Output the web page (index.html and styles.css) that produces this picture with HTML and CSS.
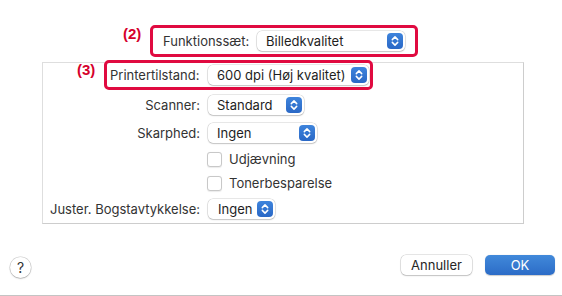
FILE: index.html
```html
<!DOCTYPE html>
<html lang="da">
<head>
<meta charset="utf-8">
<title>Billedkvalitet</title>
<link rel="stylesheet" href="styles.css">
</head>
<body>
  <div class="top">
    <span class="callout callout-2">(2)</span>
    <div class="mark mark-set">
      <span class="set-label">Funktionssæt:</span>
      <div class="popup w-set"><span>Billedkvalitet</span><span class="stepper"><svg viewBox="0 0 16 16" width="16" height="16"><path d="M5.3 6.6 L8 3.9 L10.7 6.6 M5.3 9.4 L8 12.1 L10.7 9.4" fill="none" stroke="#fff" stroke-width="1.5" stroke-linecap="round" stroke-linejoin="round"/></svg></span></div>
    </div>
  </div>

  <div class="panel">
    <div class="lead">
      <span class="callout callout-3">(3)</span>
      <div class="mark mark-print">
        <span class="print-label">Printertilstand:</span>
        <div class="popup w-print"><span>600 dpi (Høj kvalitet)</span><span class="stepper"><svg viewBox="0 0 16 16" width="16" height="16"><path d="M5.3 6.6 L8 3.9 L10.7 6.6 M5.3 9.4 L8 12.1 L10.7 9.4" fill="none" stroke="#fff" stroke-width="1.5" stroke-linecap="round" stroke-linejoin="round"/></svg></span></div>
      </div>
    </div>

    <div class="row">
      <span class="label">Scanner:</span>
      <div class="popup w-scan"><span>Standard</span><span class="stepper"><svg viewBox="0 0 16 16" width="16" height="16"><path d="M5.3 6.6 L8 3.9 L10.7 6.6 M5.3 9.4 L8 12.1 L10.7 9.4" fill="none" stroke="#fff" stroke-width="1.5" stroke-linecap="round" stroke-linejoin="round"/></svg></span></div>
    </div>

    <div class="row">
      <span class="label">Skarphed:</span>
      <div class="popup w-sharp"><span>Ingen</span><span class="stepper"><svg viewBox="0 0 16 16" width="16" height="16"><path d="M5.3 6.6 L8 3.9 L10.7 6.6 M5.3 9.4 L8 12.1 L10.7 9.4" fill="none" stroke="#fff" stroke-width="1.5" stroke-linecap="round" stroke-linejoin="round"/></svg></span></div>
    </div>

    <div class="check-row">
      <span class="checkbox"></span>
      <span>Udjævning</span>
    </div>

    <div class="check-row">
      <span class="checkbox"></span>
      <span>Tonerbesparelse</span>
    </div>

    <div class="row">
      <span class="label">Juster. Bogstavtykkelse:</span>
      <div class="popup w-font"><span>Ingen</span><span class="stepper"><svg viewBox="0 0 16 16" width="16" height="16"><path d="M5.3 6.6 L8 3.9 L10.7 6.6 M5.3 9.4 L8 12.1 L10.7 9.4" fill="none" stroke="#fff" stroke-width="1.5" stroke-linecap="round" stroke-linejoin="round"/></svg></span></div>
    </div>
  </div>

  <div class="footer">
    <span class="help">?</span>
    <span class="spacer"></span>
    <span class="btn btn-cancel">Annuller</span>
    <span class="btn btn-ok">OK</span>
  </div>
</body>
</html>
```
FILE: styles.css
```css
html, body {
  margin: 0;
  padding: 0;
}

body {
  width: 562px;
  height: 296px;
  box-sizing: border-box;
  overflow: hidden;
  background: #ffffff;
  border-bottom: 1px solid #c4c4c4;
  font-family: Inter, "Noto Sans", sans-serif;
  font-size: 13px;
  color: #333333;
  display: flex;
  flex-direction: column;
}

.top {
  display: flex;
  align-items: flex-start;
  padding: 25px 0 0 123px;
}

.callout {
  color: #d6002c;
  font-family: "Liberation Sans", Arial, sans-serif;
  font-weight: bold;
  font-size: 15px;
  line-height: 16px;
  margin-top: 1px;
  flex: none;
}

.callout-2 {
  width: 27px;
}

.callout-3 {
  width: 27px;
  margin-top: 2px;
}

.mark {
  border: 3px solid #e00a40;
  border-radius: 5px;
  display: flex;
  align-items: center;
  box-sizing: border-box;
  background: #fff;
}

.mark-set {
  width: 268px;
  height: 32px;
  padding: 0 10px;
}

.set-label {
  width: 94px;
  flex: none;
}

.print-label {
  width: 88px;
  padding-left: 3px;
  margin-right: 10px;
  flex: none;
}

.mark-print {
  width: 269px;
  height: 30px;
  padding: 0 1px 0 0;
  position: relative;
  z-index: 1;
}

.popup {
  height: 20px;
  border-radius: 5px;
  background: #fff;
  box-shadow: 0 0 0 0.5px rgba(0, 0, 0, 0.18), 0 1px 1.5px rgba(0, 0, 0, 0.16);
  display: flex;
  align-items: center;
  justify-content: space-between;
  padding: 0 2px 0 9px;
  box-sizing: border-box;
  color: #1e1e1e;
  flex: none;
}

.w-set { width: 148px; }
.w-print { width: 161px; }
.w-scan { width: 96px; }
.w-sharp { width: 109px; }
.w-font { width: 67px; padding-left: 10px; }

.stepper {
  width: 16px;
  height: 16px;
  border-radius: 4px;
  background: linear-gradient(#3e84dc, #2a68c6);
  display: flex;
}

.stepper svg {
  display: block;
}

.panel {
  margin: 5px 0 0 42px;
  width: 482px;
  height: 162px;
  box-sizing: border-box;
  border: 1px solid #dedede;
  border-right-color: #cdcdcd;
  border-bottom-color: #cdcdcd;
  display: flex;
  flex-direction: column;
  gap: 6px;
}

.lead {
  display: flex;
  align-items: flex-start;
  margin: -3px 0 -2px 34px;
}

.row {
  display: flex;
  align-items: center;
  height: 22px;
}

.label {
  width: 157px;
  text-align: right;
  margin-right: 8px;
  flex: none;
}

.check-row {
  display: flex;
  align-items: center;
  height: 18px;
  padding-left: 164px;
  gap: 7px;
}

.checkbox {
  width: 13px;
  height: 13px;
  border-radius: 3px;
  background: #fff;
  border: 1px solid #c8c8c8;
  box-shadow: 0 0.5px 1px rgba(0, 0, 0, 0.08);
  flex: none;
}

.footer {
  display: flex;
  align-items: flex-start;
  height: 22px;
  margin-top: 31px;
  padding: 0 7px 0 10px;
}

.help {
  width: 21px;
  height: 21px;
  margin-top: 2px;
  border-radius: 50%;
  background: #fff;
  box-shadow: 0 0 0 0.5px rgba(0, 0, 0, 0.2), 0 1px 1.5px rgba(0, 0, 0, 0.18);
  display: flex;
  align-items: center;
  justify-content: center;
  font-size: 14px;
  color: #333;
}

.spacer {
  flex: 1;
}

.btn {
  height: 20px;
  border-radius: 5px;
  display: flex;
  align-items: center;
  justify-content: center;
  box-sizing: border-box;
}

.btn-cancel {
  width: 71px;
  margin-right: 13px;
  background: #fff;
  color: #262626;
  box-shadow: 0 0 0 0.5px rgba(0, 0, 0, 0.2), 0 1px 1.5px rgba(0, 0, 0, 0.16);
}

.btn-ok {
  width: 70px;
  background: linear-gradient(#4189da, #2c6cc7);
  color: #fff;
  box-shadow: 0 0.5px 1px rgba(0, 0, 0, 0.2);
}
```
